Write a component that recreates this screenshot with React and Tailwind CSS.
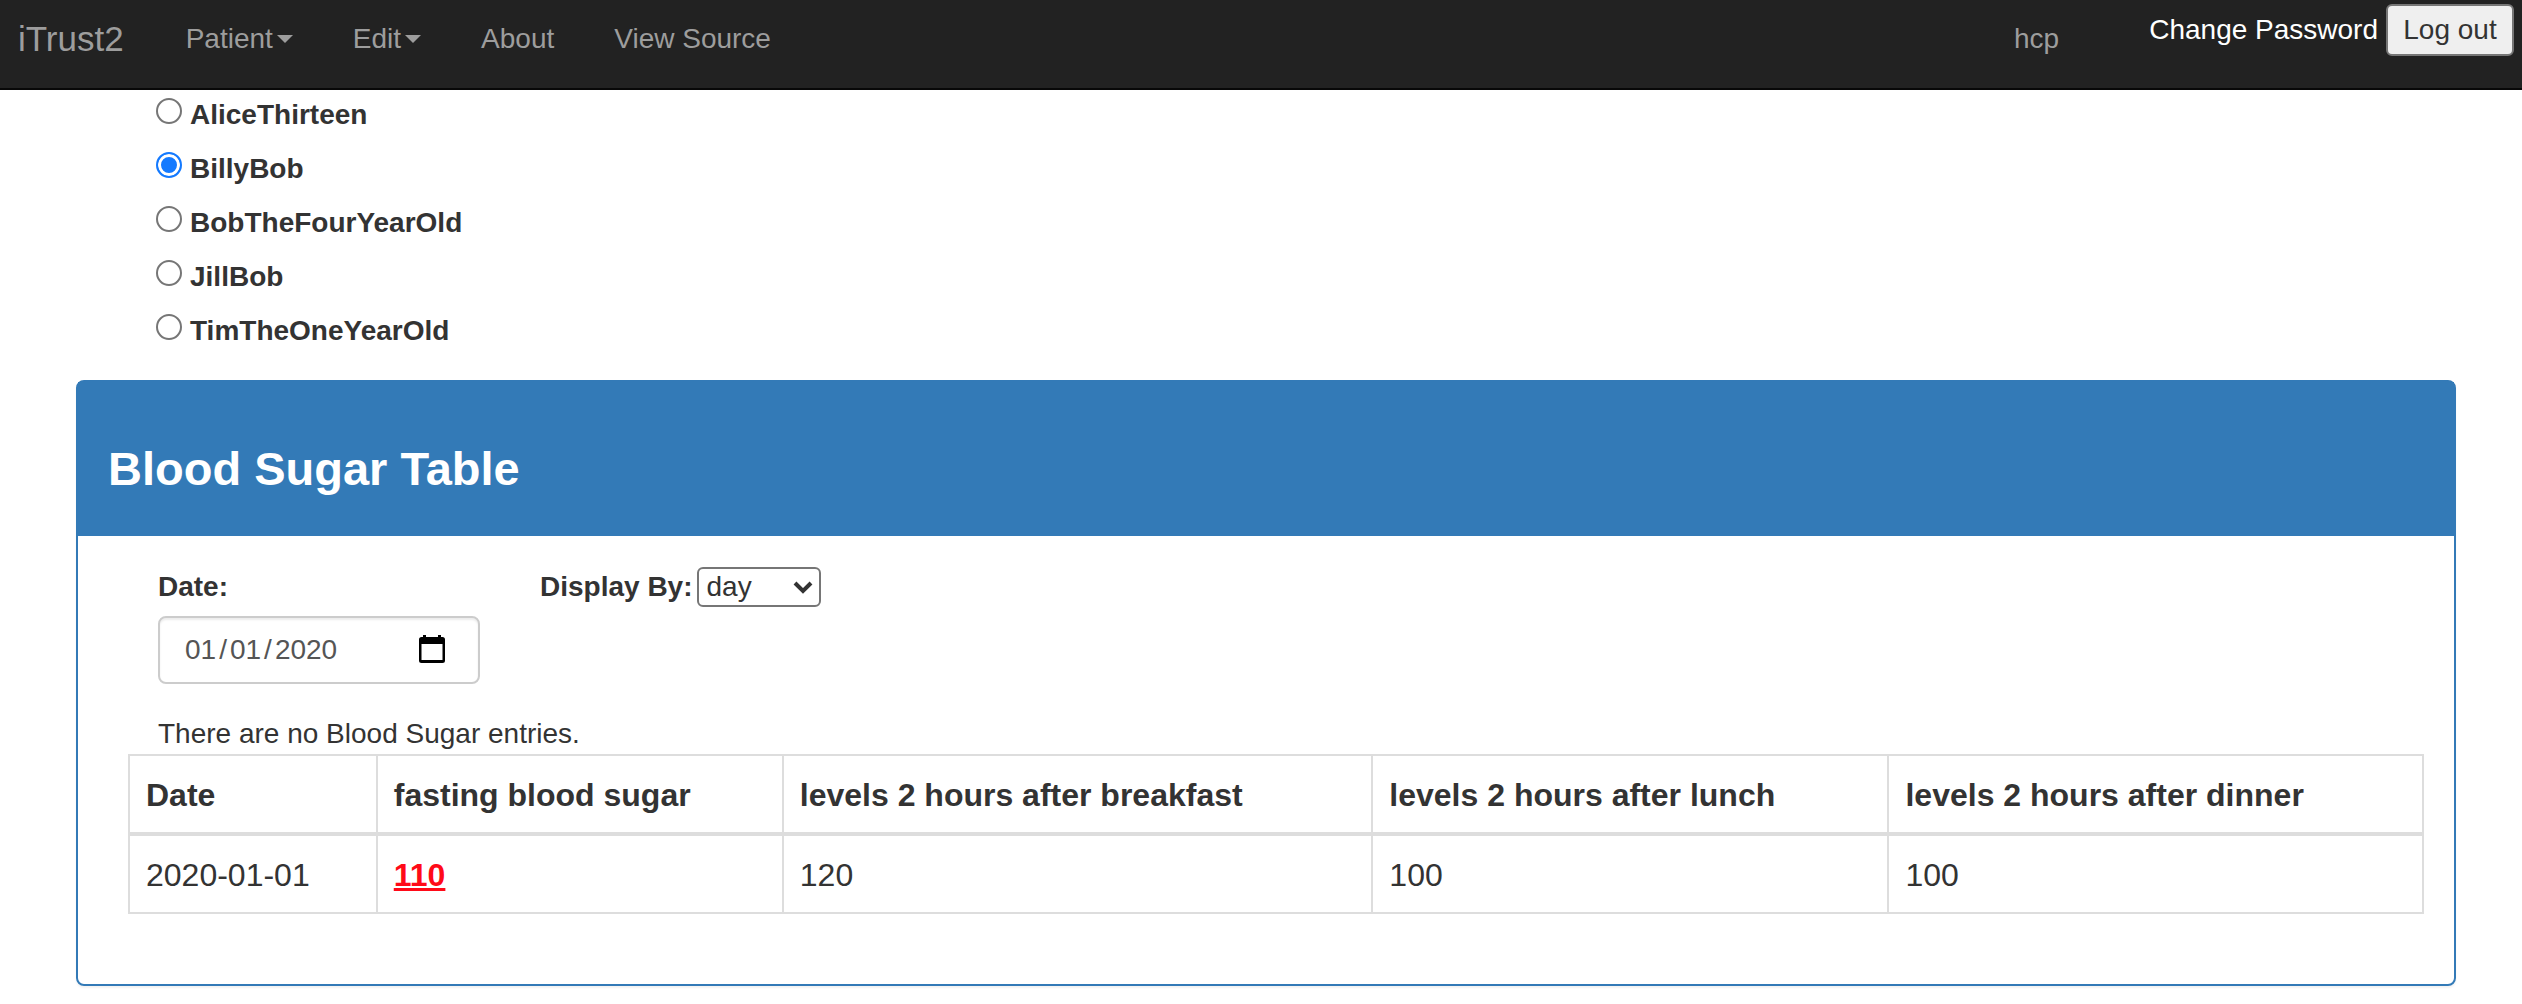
const patients = ["AliceThirteen", "BillyBob", "BobTheFourYearOld", "JillBob", "TimTheOneYearOld"];

const columns = [
  { title: "Date", width: "w-[10.8%]" },
  { title: "fasting blood sugar", width: "w-[17.7%]" },
  { title: "levels 2 hours after breakfast", width: "w-[25.7%]" },
  { title: "levels 2 hours after lunch", width: "w-[22.5%]" },
  { title: "levels 2 hours after dinner", width: "w-[23.3%]" },
];

const entries = [{ date: "2020-01-01", fasting: 110, others: [120, 100, 100] }];

function Caret() {
  return (
    <svg className="ml-1 h-2 w-4" viewBox="0 0 16 8" fill="currentColor" aria-hidden="true">
      <path d="M0 0h16L8 8z" />
    </svg>
  );
}

function NavItem({ label, caret }) {
  return (
    <a href="#" className="flex items-center px-[30px] leading-10 text-[#9d9d9d]">
      {label}
      {caret && <Caret />}
    </a>
  );
}

function Navbar() {
  return (
    <nav className="flex h-[90px] items-start justify-between border-b-2 border-[#080808] bg-[#222] pr-2 pl-[18px]">
      <div className="flex items-center pt-[19px]">
        <a href="#" className="mr-8 text-[35px] leading-10 text-[#9d9d9d]">iTrust2</a>
        <NavItem label="Patient" caret />
        <NavItem label="Edit" caret />
        <NavItem label="About" />
        <NavItem label="View Source" />
      </div>
      <div className="flex items-start">
        <span className="mr-[90px] pt-[19px] leading-10 text-[#9d9d9d]">hcp</span>
        <div className="flex items-center gap-2 pt-1">
          <a href="#" className="text-white">Change Password</a>
          <button type="button" className="h-[52px] w-[128px] rounded-md border-2 border-[#767676] bg-[#efefef] text-[#333]">
            Log out
          </button>
        </div>
      </div>
    </nav>
  );
}

function PatientList() {
  return (
    <fieldset className="flex flex-col gap-[14px] pt-[5px] pl-[156px]">
      {patients.map((name) => (
        <label key={name} className="flex items-start gap-2 self-start font-bold">
          <input
            type="radio"
            name="patient"
            value={name}
            defaultChecked={name === "BillyBob"}
            className="mt-[3px] size-[26px] appearance-none rounded-full border-2 border-[#767676] bg-white checked:border-[#147aff] checked:bg-[#147aff] checked:shadow-[inset_0_0_0_3px_white]"
          />
          {name}
        </label>
      ))}
    </fieldset>
  );
}

function CalendarIcon() {
  return (
    <svg
      className="pointer-events-none absolute top-[19px] right-[35px] h-7 w-[26px]"
      viewBox="0 0 26 28"
      fill="black"
      aria-hidden="true"
    >
      <path
        fillRule="evenodd"
        d="M4 0h3v2h12V0h3v2h1.500a2.500 2.500 0 0 1 2.500 2.500v21a2.500 2.500 0 0 1-2.500 2.500h-21A2.500 2.500 0 0 1 0 25.500v-21A2.500 2.500 0 0 1 2.500 2H4zM2.500 9v16h21V9z"
      />
    </svg>
  );
}

function Filters() {
  return (
    <div className="flex items-start gap-[60px] px-[50px]">
      <div className="flex flex-col gap-[9px]">
        <label htmlFor="date" className="font-bold">Date:</label>
        <div className="relative">
          <input
            id="date"
            type="date"
            defaultValue="2020-01-01"
            className="block h-[68px] w-[322px] rounded-lg border-2 border-[#ccc] bg-white px-6 text-[#555] shadow-[inset_0_2px_2px_rgba(0,0,0,0.075)] [&::-webkit-calendar-picker-indicator]:opacity-0 [&::-webkit-datetime-edit-text]:px-[2px]"
          />
          <CalendarIcon />
        </div>
      </div>
      <div className="flex items-center gap-1">
        <label htmlFor="display-by" className="font-bold">Display By:</label>
        <div className="relative">
          <select
            id="display-by"
            defaultValue="day"
            className="block h-10 w-[124px] appearance-none rounded-md border-2 border-[#767676] bg-white px-2 leading-9 text-[#333]"
          >
            <option>day</option>
            <option>week</option>
            <option>month</option>
          </select>
          <svg
            className="pointer-events-none absolute top-3 right-2 h-4 w-5"
            viewBox="0 0 20 16"
            fill="none"
            stroke="#333"
            strokeWidth="4"
            aria-hidden="true"
          >
            <path d="M2 4l8 8 8-8" />
          </svg>
        </div>
      </div>
    </div>
  );
}

function EntriesTable() {
  return (
    <table className="w-full border-collapse text-left text-[32px] leading-[44px]">
      <thead>
        <tr>
          {columns.map(({ title, width }) => (
            <th key={title} className={`${width} border-2 border-b-4 border-[#ddd] px-4 pt-[17px] pb-[15px] font-bold`}>
              {title}
            </th>
          ))}
        </tr>
      </thead>
      <tbody>
        {entries.map((e) => (
          <tr key={e.date}>
            <td className="border-2 border-[#ddd] px-4 pt-[17px] pb-[15px]">{e.date}</td>
            <td className="border-2 border-[#ddd] px-4 pt-[17px] pb-[15px] font-bold text-[#ff0a18] underline">{e.fasting}</td>
            {e.others.map((v, i) => (
              <td key={i} className="border-2 border-[#ddd] px-4 pt-[17px] pb-[15px]">{v}</td>
            ))}
          </tr>
        ))}
      </tbody>
    </table>
  );
}

export default function App() {
  return (
    <div className="min-h-screen bg-white font-['Liberation_Sans',Arial,sans-serif] text-[28px] leading-10 text-[#333]">
      <Navbar />
      <main>
        <PatientList />
        <section className="mt-[29px] mr-[66px] mb-4 ml-[76px] rounded-lg border-2 border-[#337ab7] shadow-[0_2px_2px_rgba(0,0,0,0.05)]">
          <header className="bg-[#337ab7] px-[30px] pt-[60px] pb-10 text-white">
            <h3 className="text-[47px] leading-[54px] font-bold">Blood Sugar Table</h3>
          </header>
          <div className="px-[30px] pt-[31px] pb-[70px]">
            <Filters />
            <p className="mt-[30px] px-[50px]">There are no Blood Sugar entries.</p>
            <div className="pl-5">
              <EntriesTable />
            </div>
          </div>
        </section>
      </main>
    </div>
  );
}
